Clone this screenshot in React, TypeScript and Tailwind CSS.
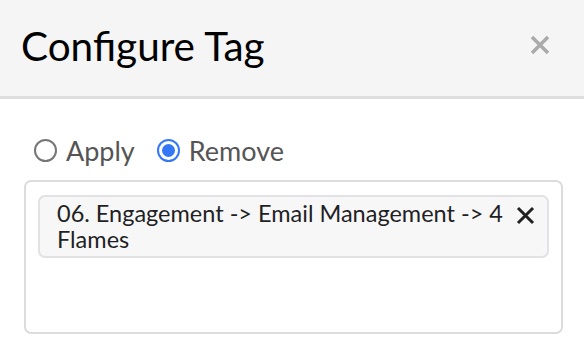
import { useState } from "react";

function Radio({ checked, label, onClick }: { checked: boolean; label: string; onClick: () => void }) {
  return (
    <button type="button" onClick={onClick} className="flex items-center gap-[9px]">
      <span
        className={`flex h-[23px] w-[23px] items-center justify-center rounded-full border-2 ${
          checked ? "border-[#3478f6]" : "border-[#767676]"
        }`}
      >
        {checked && <span className="h-[13px] w-[13px] rounded-full bg-[#3478f6]" />}
      </span>
      <span className="text-[27px] leading-none text-[#555]">{label}</span>
    </button>
  );
}

export default function App() {
  const [mode, setMode] = useState<"apply" | "remove">("remove");

  return (
    <div className="h-[360px] w-[584px] overflow-hidden bg-white font-['Lato',sans-serif]">
      <div className="flex h-[99px] items-start justify-between border-b-[3px] border-[#dedede] bg-[#f5f5f5] pl-[21px] pr-[33px] pt-[22px]">
        <h1 className="text-[40.5px] leading-[48px] text-black">Configure Tag</h1>
        <button type="button" className="mt-[12px] text-[#aaa]">
          <svg width="22" height="22" viewBox="0 0 22 22">
            <path d="M3 3L19 19M19 3L3 19" stroke="currentColor" strokeWidth="3.5" />
          </svg>
        </button>
      </div>

      <div className="pl-[24px] pr-[21px] pt-[38px]">
        <div className="flex items-center gap-[22px] pl-[10px]">
          <Radio checked={mode === "apply"} label="Apply" onClick={() => setMode("apply")} />
          <Radio checked={mode === "remove"} label="Remove" onClick={() => setMode("remove")} />
        </div>

        <div className="mt-[16px] h-[154px] rounded-[7px] border-2 border-[#dcdcdc] pl-[12px] pr-[12px] pt-[13px]">
          <div className="flex items-start justify-between rounded-[7px] border-2 border-[#e2e2e6] bg-[#f7f7f8] pb-[4px] pl-[17px] pr-[12px] pt-[3px]">
            <span className="flex-1 text-[23.5px] leading-[26px] text-[#1f1f24]">
              06. Engagement -&gt; Email Management -&gt; 4 Flames
            </span>
            <svg width="19" height="19" viewBox="0 0 19 19" className="ml-[6px] mt-[6px] shrink-0 text-[#222]">
              <path d="M2 2L17 17M17 2L2 17" stroke="currentColor" strokeWidth="3" />
            </svg>
          </div>
        </div>
      </div>
    </div>
  );
}
